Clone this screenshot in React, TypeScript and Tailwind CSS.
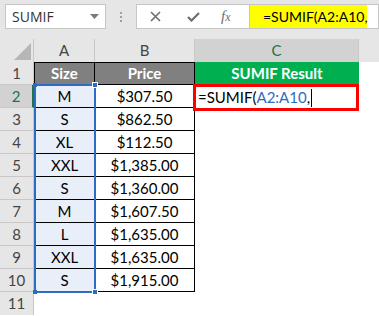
import React from "react";

const rows: [string, string][] = [
  ["M", "$307.50"],
  ["S", "$862.50"],
  ["XL", "$112.50"],
  ["XXL", "$1,385.00"],
  ["S", "$1,360.00"],
  ["M", "$1,607.50"],
  ["L", "$1,635.00"],
  ["XXL", "$1,635.00"],
  ["S", "$1,915.00"],
];

const font = { fontFamily: "Lato, 'Open Sans', sans-serif" };

export default function App() {
  return (
    <div className="relative w-[379px] h-[316px] overflow-hidden bg-white" style={font}>
      {/* toolbar */}
      <div className="flex h-[39px] items-start bg-[#e6e6e6] pt-[4px]">
        <div className="ml-[5px] flex h-[25px] w-[101px] items-center justify-between border border-[#c6c6c6] bg-white pl-[6px] pr-[6px] text-[14px] text-[#333]">
          <span style={{ fontFamily: "'Open Sans', sans-serif" }}>SUMIF</span>
          <svg width="9" height="5" viewBox="0 0 9 5"><path d="M0 0h9L4.5 5z" fill="#7a7a7a" /></svg>
        </div>
        <div className="ml-[14px] mt-[8px] flex flex-col gap-[2px]">
          <div className="h-[2px] w-[2px] bg-[#a0a0a0]" />
          <div className="h-[2px] w-[2px] bg-[#a0a0a0]" />
          <div className="h-[2px] w-[2px] bg-[#a0a0a0]" />
        </div>
        <div className="ml-[14px] flex h-[25px] w-[113px] items-center border border-[#c6c6c6] border-r-0 bg-white">
          <svg className="ml-[13px]" width="11" height="11" viewBox="0 0 11 11">
            <path d="M1 1L10 10M10 1L1 10" stroke="#6e6e6e" strokeWidth="1.6" />
          </svg>
          <svg className="ml-[26px]" width="13" height="10" viewBox="0 0 13 10">
            <path d="M1 5L4.5 8.5L12 1" stroke="#6e6e6e" strokeWidth="2.2" fill="none" />
          </svg>
          <span className="ml-[21px] text-[15px] italic text-[#6e6e6e]" style={{ fontFamily: "'Liberation Serif', serif" }}>
            f<span className="text-[12px]">x</span>
          </span>
        </div>
        <div className="flex h-[25px] flex-1 items-center border border-[#c6c6c6] bg-white">
          <div className="flex h-[23px] w-[117px] items-center bg-[#ffff00] pl-[13px] text-[14px] text-black">
            =SUMIF(A2:A10,
          </div>
        </div>
      </div>

      {/* header row */}
      <div className="flex h-[23px] bg-[#e6e6e6] text-[15px] text-[#444]">
        <div className="relative w-[34px] border-r border-[#c8c8c8]">
          <svg className="absolute bottom-[2px] right-[2px]" width="17" height="17" viewBox="0 0 17 17">
            <path d="M17 0V17H0z" fill="#b6b6b6" />
          </svg>
        </div>
        <div className="flex w-[61px] items-center justify-center border-r border-[#c8c8c8]">A</div>
        <div className="flex w-[100px] items-center justify-center border-r border-[#c8c8c8]">B</div>
        <div className="flex w-[164px] items-center justify-center border-r border-[#c8c8c8] bg-[#d2d2d2] text-[#217346]">C</div>
        <div className="flex-1" />
      </div>

      {/* row 1 */}
      <div className="flex h-[23px] text-[15px]">
        <div className="flex w-[34px] items-center justify-center border-r border-b border-[#c8c8c8] bg-[#e6e6e6] text-[#444]">1</div>
        <div className="flex w-[61px] items-center justify-center border border-black bg-[#808080] font-bold text-white">Size</div>
        <div className="flex w-[100px] items-center justify-center border-y border-r border-black bg-[#808080] font-bold text-white">Price</div>
        <div className="flex w-[164px] items-center justify-center border-y border-[#00b050] bg-[#00b050] font-bold text-white">SUMIF Result</div>
      </div>

      {rows.map(([size, price], i) => {
        const n = i + 2;
        const active = n === 2;
        return (
          <div key={n} className="flex h-[23px] text-[15px]">
            <div
              className={
                active
                  ? "flex w-[34px] items-center justify-center border-r-2 border-b border-r-[#217346] border-b-[#c8c8c8] bg-[#d2d2d2] text-[#217346]"
                  : "flex w-[34px] items-center justify-center border-r border-b border-[#c8c8c8] bg-[#e6e6e6] text-[#444]"
              }
            >
              {n}
            </div>
            <div className="flex w-[61px] items-center justify-center border-x border-b border-black bg-[#e8eff9] text-black">{size}</div>
            <div className="flex w-[100px] items-center justify-center border-r border-b border-black text-black">{price}</div>
            <div className="w-[164px]" />
          </div>
        );
      })}

      {/* row 11 */}
      <div className="flex h-[23px] text-[15px]">
        <div className="flex w-[34px] items-center justify-center border-r border-[#c8c8c8] bg-[#e6e6e6] text-[#444]">11</div>
      </div>

      {/* selection A2:A10 */}
      <div className="absolute left-[34px] top-[84px] h-[209px] w-[62px] border-2 border-[#2e6cc4]" />
      <div className="absolute left-[33px] top-[83px] h-[4px] w-[4px] bg-[#2e6cc4]" />
      <div className="absolute left-[92px] top-[82px] h-[6px] w-[6px] border border-white bg-[#2e6cc4]" />
      <div className="absolute left-[33px] top-[290px] h-[4px] w-[4px] bg-[#2e6cc4]" />
      <div className="absolute left-[92px] top-[289px] h-[6px] w-[6px] border border-white bg-[#2e6cc4]" />

      {/* red active cell box */}
      <div className="absolute left-[193px] top-[84px] flex h-[27px] w-[166px] items-center border-[3px] border-[#ff0000] bg-white pl-[2px] text-[15px] text-black">
        <span>=SUMIF(</span>
        <span className="text-[#2e6cc4]">A2:A10</span>
        <span>,</span>
        <span className="ml-[1px] h-[18px] w-[1px] bg-black" />
      </div>
    </div>
  );
}
